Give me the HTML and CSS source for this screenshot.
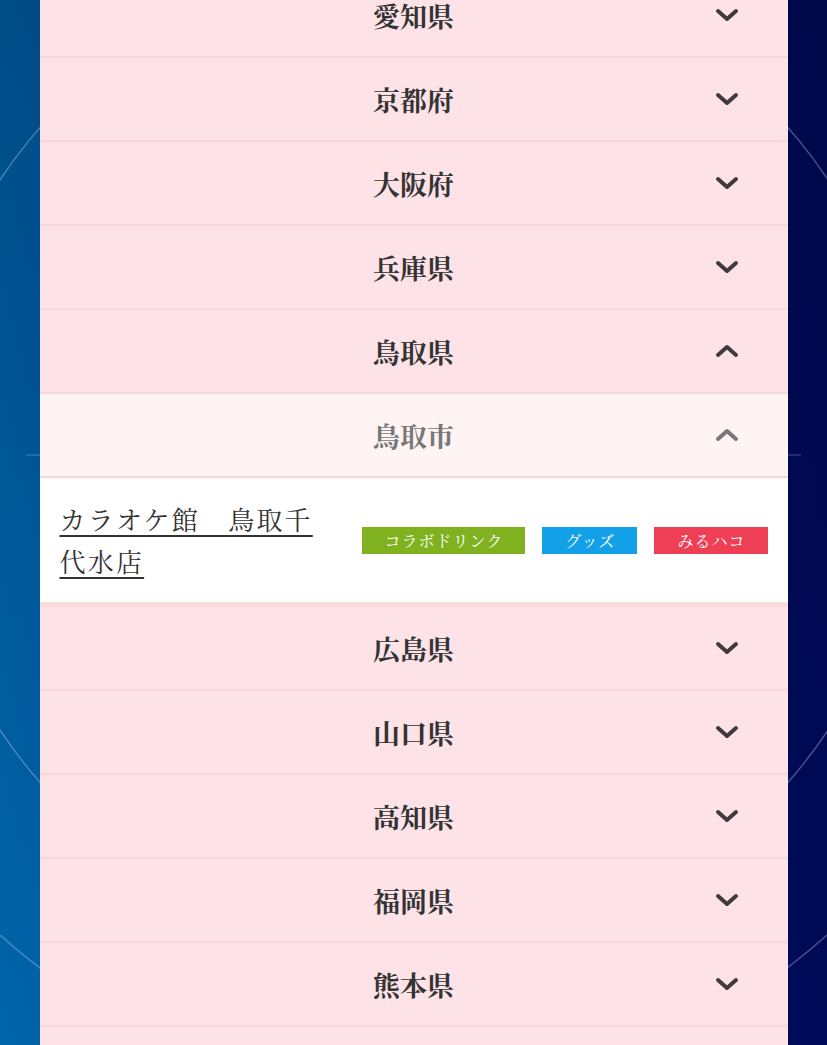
FILE: index.html
```html
<!DOCTYPE html>
<html lang="ja">
<head>
    <meta charset="UTF-8">
    <meta name="viewport" content="width=device-width, initial-scale=1.0">
    <title>店舗一覧</title>
    <link rel="stylesheet" href="styles.css">
</head>
<body>
    <svg class="deco" viewBox="0 0 827 1045" preserveAspectRatio="none" aria-hidden="true">
        <circle cx="414" cy="455" r="497" />
        <path d="M0 935 A620 620 0 0 0 827 935" />
        <line class="flare" x1="26" y1="455" x2="801" y2="455" />
    </svg>

    <div class="list">
        <div class="pref">
            <span class="name">愛知県</span>
            <svg class="arrow" viewBox="0 0 24 14"><polyline points="3,3 12,11 21,3" /></svg>
        </div>
        <div class="pref">
            <span class="name">京都府</span>
            <svg class="arrow" viewBox="0 0 24 14"><polyline points="3,3 12,11 21,3" /></svg>
        </div>
        <div class="pref">
            <span class="name">大阪府</span>
            <svg class="arrow" viewBox="0 0 24 14"><polyline points="3,3 12,11 21,3" /></svg>
        </div>
        <div class="pref">
            <span class="name">兵庫県</span>
            <svg class="arrow" viewBox="0 0 24 14"><polyline points="3,3 12,11 21,3" /></svg>
        </div>
        <div class="pref">
            <span class="name">鳥取県</span>
            <svg class="arrow" viewBox="0 0 24 14"><polyline points="3,11 12,3 21,11" /></svg>
        </div>
        <div class="pref city">
            <span class="name">鳥取市</span>
            <svg class="arrow" viewBox="0 0 24 14"><polyline points="3,11 12,3 21,11" /></svg>
        </div>

        <div class="shops">
            <div class="shop">
                <a class="shop-name" href="#">カラオケ館　鳥取千代水店</a>
                <div class="tags">
                    <span class="tag drink">コラボドリンク</span>
                    <span class="tag goods">グッズ</span>
                    <span class="tag box">みるハコ</span>
                </div>
            </div>
        </div>

        <div class="pref">
            <span class="name">広島県</span>
            <svg class="arrow" viewBox="0 0 24 14"><polyline points="3,3 12,11 21,3" /></svg>
        </div>
        <div class="pref">
            <span class="name">山口県</span>
            <svg class="arrow" viewBox="0 0 24 14"><polyline points="3,3 12,11 21,3" /></svg>
        </div>
        <div class="pref">
            <span class="name">高知県</span>
            <svg class="arrow" viewBox="0 0 24 14"><polyline points="3,3 12,11 21,3" /></svg>
        </div>
        <div class="pref">
            <span class="name">福岡県</span>
            <svg class="arrow" viewBox="0 0 24 14"><polyline points="3,3 12,11 21,3" /></svg>
        </div>
        <div class="pref">
            <span class="name">熊本県</span>
            <svg class="arrow" viewBox="0 0 24 14"><polyline points="3,3 12,11 21,3" /></svg>
        </div>
        <div class="pref last"></div>
    </div>
</body>
</html>
```

FILE: styles.css
```css
html, body {
    height: 100%;
}

body {
    margin: 0;
    padding: 0;
    overflow: hidden;
    font-family: "Noto Serif CJK JP", "Noto Sans CJK JP", serif;
    color: #333;
    background:
        linear-gradient(to bottom, rgba(0, 0, 30, 0.25), rgba(0, 0, 30, 0) 100%),
        linear-gradient(to right, #0066aa 0%, #0052a0 25%, #00207a 60%, #000c5e 85%, #000a58 100%);
}

.deco {
    position: fixed;
    top: 0;
    left: 0;
    width: 827px;
    height: 1045px;
    z-index: 0;
}

.deco circle,
.deco path {
    fill: none;
    stroke: rgba(190, 215, 255, 0.35);
    stroke-width: 1.5;
}

.deco .flare {
    stroke: rgba(200, 225, 255, 0.22);
    stroke-width: 1.5;
}

.list {
    position: relative;
    z-index: 1;
    width: 748px;
    margin: -26px auto 0;
    background-color: #fde3e8;
}

.pref {
    display: grid;
    grid-template-columns: 1fr auto 1fr;
    align-items: center;
    height: 82px;
    border-bottom: 2px solid #f9d6dc;
    background-color: #fde3e8;
}

.pref .name {
    grid-column: 2;
    font-size: 27px;
    font-weight: bold;
    color: #333;
}

.pref .arrow {
    grid-column: 3;
    justify-self: end;
    margin-right: 49px;
    width: 24px;
    height: 14px;
}

.arrow polyline {
    fill: none;
    stroke: #403a3c;
    stroke-width: 4;
    stroke-linecap: round;
    stroke-linejoin: round;
}

.pref.city {
    background-color: #fef4f4;
}

.pref.city .name {
    color: #777;
}

.pref.city .arrow polyline {
    stroke: #7b7677;
}

.shops {
    background-color: #fff;
    border-bottom: 5px solid #fbdade;
}

.shop {
    display: flex;
    align-items: center;
    justify-content: space-between;
    min-height: 124px;
    padding: 0 20px;
    box-sizing: border-box;
}

.shop-name {
    width: 280px;
    font-size: 26px;
    line-height: 42px;
    letter-spacing: 2.2px;
    color: #333;
    text-decoration: underline;
    text-decoration-thickness: 2px;
    text-underline-offset: 5px;
}

.tags {
    display: flex;
    gap: 17px;
}

.tag {
    display: flex;
    align-items: center;
    height: 27px;
    padding: 0 22px 0 23px;
    color: #fff;
    font-size: 16px;
    letter-spacing: 1px;
}

.tag.drink {
    background-color: #80b21f;
}

.tag.goods {
    background-color: #12a0e8;
}

.tag.box {
    background-color: #ef3f57;
}
```
